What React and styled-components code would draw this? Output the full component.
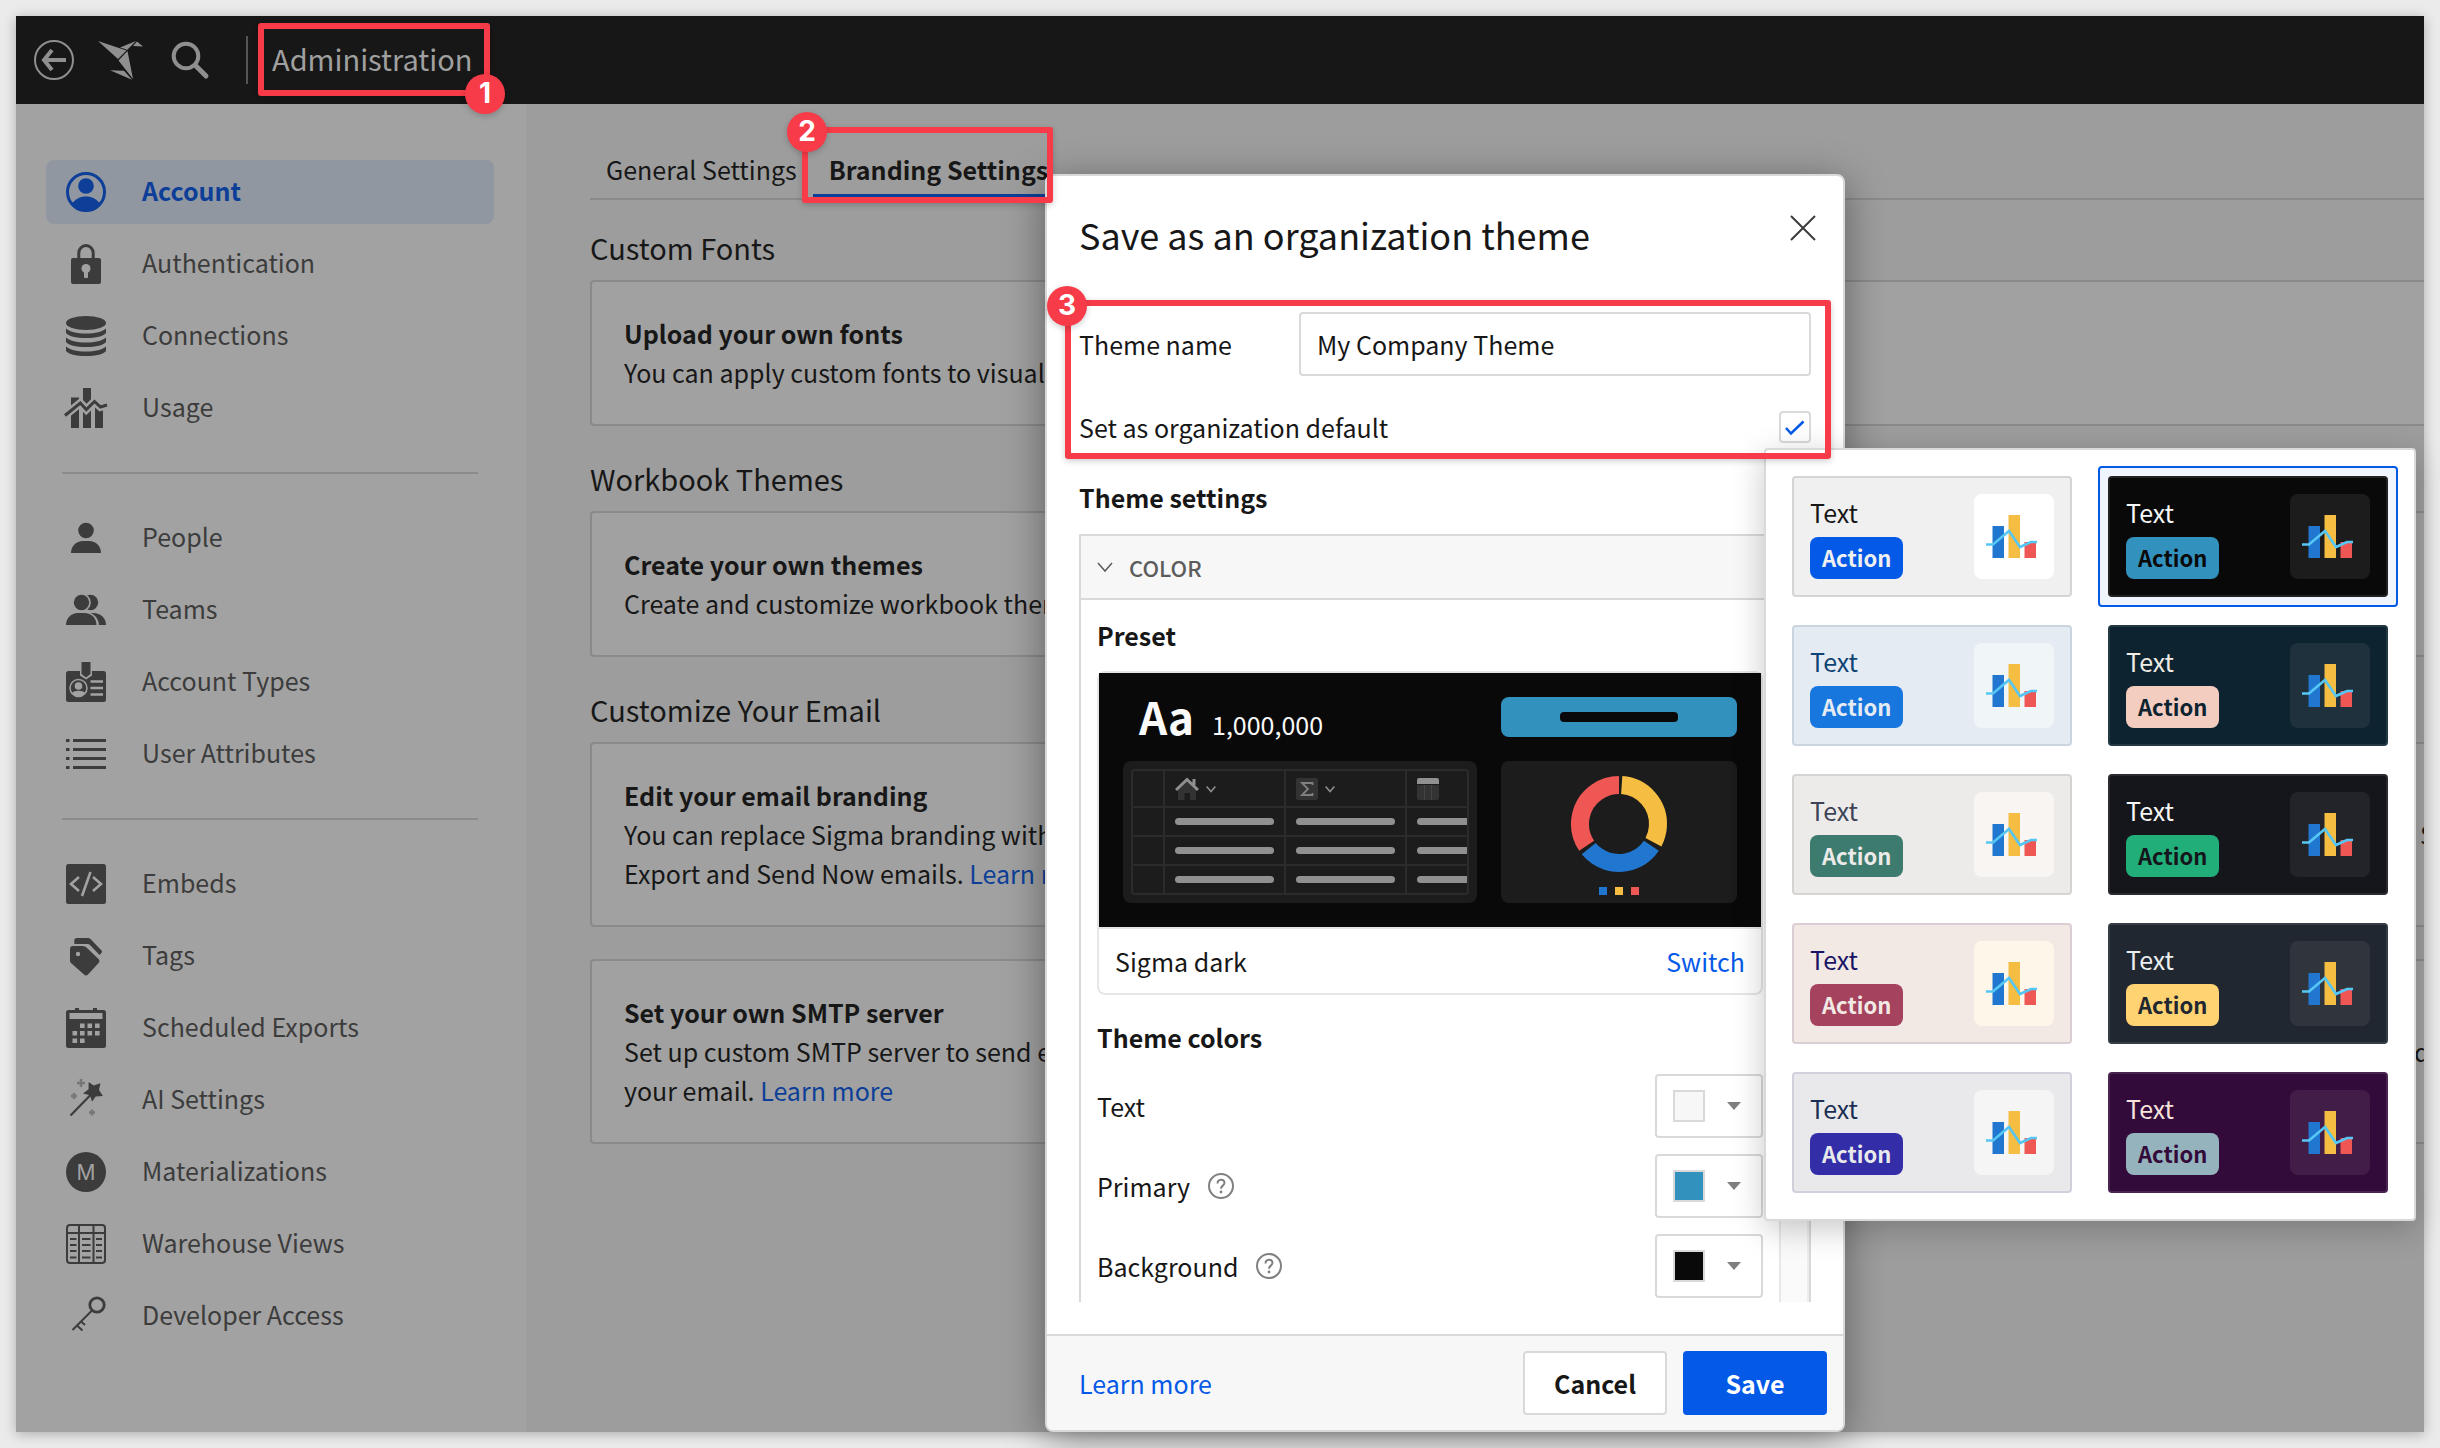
import React from "react";
import styled, { createGlobalStyle } from "styled-components";

const GlobalStyle = createGlobalStyle`
  *, *::before, *::after { box-sizing: border-box; }
  body {
    margin: 0;
    background: #ebebeb;
    color: #171717;
    font-family: "Noto Sans CJK SC", "Noto Sans", sans-serif;
    font-size: 25px;
    line-height: 39px;
  }
  button, input { font: inherit; color: inherit; }
  h1, h2, h3, p { margin: 0; font-size: inherit; font-weight: inherit; }
`;

const line = "#d9d9d9";
const blue = "#0559e7";
const red = "#f73b48";

const Page = styled.div`
  min-height: 100vh;
  padding: 16px;
  display: flex;
`;

const Frame = styled.div`
  position: relative;
  flex: 1;
  min-width: 0;
  display: flex;
  flex-direction: column;
  background: #9d9d9d;
  box-shadow: 0 2px 12px rgba(0, 0, 0, 0.28);
`;

const TopBar = styled.header`
  height: 88px;
  flex: none;
  padding-left: 18px;
  display: flex;
  align-items: center;
  gap: 24px;
  background: #171717;
  color: #8f8f8f;
`;

const BarButton = styled.button`
  padding: 0;
  border: 0;
  background: none;
  color: inherit;
  display: flex;
`;

const BarDivider = styled.div`
  width: 2px;
  height: 48px;
  margin-left: 10px;
  background: #555;
`;

const PageTitle = styled.h1`
  padding-bottom: 3px;
  font-size: 29px;
  color: #a0a0a0;
`;

const Body = styled.div`
  flex: 1;
  display: flex;
  overflow: hidden;
`;

const Sidebar = styled.nav`
  width: 510px;
  flex: none;
  padding: 56px 32px 56px 30px;
  background: #a2a2a2;
`;

const NavGroup = styled.ul`
  list-style: none;
  margin: 0;
  padding: 0;
  display: flex;
  flex-direction: column;
  gap: 8px;
  & + & {
    margin-top: 32px;
    padding-top: 34px;
    position: relative;
  }
  & + &::before {
    content: "";
    position: absolute;
    top: 0;
    left: 16px;
    right: 16px;
    height: 2px;
    background: #8b8b8b;
  }
`;

const NavLink = styled.a`
  height: 64px;
  padding: 0 20px;
  display: flex;
  align-items: center;
  gap: 36px;
  border-radius: 8px;
  text-decoration: none;
  color: ${(p) => (p.$active ? "#0d3f98" : "#3c3c3c")};
  font-weight: ${(p) => (p.$active ? 700 : 400)};
  background: ${(p) => (p.$active ? "#9197a1" : "transparent")};
  svg { overflow: visible; flex: none; }
`;

const NavLabel = styled.span`
  padding-bottom: 3px;
`;

const Main = styled.main`
  flex: 1;
  min-width: 0;
  overflow: hidden;
  padding: 40px 0 0 64px;
  display: flex;
  flex-direction: column;
  gap: 32px;
`;

const Tabs = styled.div`
  height: 56px;
  margin-bottom: -5px;
  display: flex;
  box-shadow: inset 0 -2px #8a8a8a;
`;

const Tab = styled.button`
  padding: 0 16px;
  border: 0;
  border-bottom: 6px solid ${(p) => (p.$active ? "#0d3f98" : "transparent")};
  background: none;
  white-space: nowrap;
  font-weight: ${(p) => (p.$active ? 700 : 400)};
`;

const Section = styled.section`
  display: flex;
  flex-direction: column;
`;

const SectionTitle = styled.h2`
  font-size: 29px;
  line-height: 41px;
  margin-bottom: 12px;
`;

const Card = styled.div`
  padding: 32px 0 32px 32px;
  border: 2px solid #8a8a8a;
  border-right: 0;
  border-radius: 4px 0 0 4px;
  background: #a1a1a1;
  white-space: nowrap;
  & + & { margin-top: 32px; }
`;

const CardTitle = styled.h3`
  font-weight: 700;
`;

const CardLine = styled.p`
  display: flex;
  justify-content: space-between;
`;

const LineEnd = styled.span`
  width: ${(p) => p.$shown}px;
`;

const Link = styled.a`
  color: ${(p) => (p.$dim ? "#0d3f98" : blue)};
  text-decoration: none;
`;

const Modal = styled.section`
  position: absolute;
  top: 158px;
  right: 579px;
  bottom: 0;
  width: 800px;
  display: flex;
  flex-direction: column;
  border: 2px solid ${line};
  border-radius: 8px;
  background: #fff;
  box-shadow: 0 8px 40px rgba(0, 0, 0, 0.4);
  overflow: hidden;
`;

const ModalHead = styled.div`
  padding: 32px 24px 0 32px;
  height: 136px;
  display: flex;
  justify-content: space-between;
`;

const ModalTitle = styled.h2`
  font-size: 36px;
  line-height: 53px;
`;

const CloseButton = styled.button`
  width: 32px;
  height: 40px;
  padding: 0;
  border: 0;
  background: none;
  display: grid;
  place-items: center;
`;

const Form = styled.div`
  flex: 1;
  min-height: 0;
  padding: 0 32px 32px;
  display: flex;
  flex-direction: column;
`;

const Field = styled.div`
  display: flex;
  align-items: center;
  justify-content: space-between;
  height: ${(p) => p.$height}px;
  flex: none;
`;

const TextInput = styled.input`
  width: 512px;
  height: 64px;
  padding: 0 16px;
  border: 2px solid ${line};
  border-radius: 4px;
  background: #fff;
`;

const CheckWrap = styled.span`
  position: relative;
  display: flex;
  svg { position: absolute; inset: 0; pointer-events: none; }
`;

const Checkbox = styled.input`
  appearance: none;
  width: 32px;
  height: 32px;
  margin: 0;
  border: 2px solid ${line};
  border-radius: 4px;
  background: #fff;
`;

const Strong = styled.h3`
  font-weight: 700;
  height: ${(p) => p.$height}px;
  line-height: ${(p) => p.$line || p.$height}px;
  flex: none;
`;

const Settings = styled.div`
  flex: 1;
  min-height: 0;
  overflow: hidden;
  display: flex;
  flex-direction: column;
  border: 2px solid ${line};
  border-bottom: 0;
`;

const SettingsHead = styled.button`
  flex: none;
  height: 64px;
  padding: 0 16px;
  display: flex;
  align-items: center;
  gap: 16px;
  border: 0;
  border-bottom: 2px solid ${line};
  background: #f7f7f7;
  color: #5c5c5c;
  font-size: 22px;
  font-weight: 500;
`;

const Scroll = styled.div`
  flex: 1;
  min-height: 0;
  overflow: hidden;
  display: flex;
`;

const ScrollContent = styled.div`
  flex: 1;
  min-width: 0;
  padding: 0 16px;
`;

const Track = styled.div`
  width: 30px;
  background: #fafafa;
  border-left: 2px solid #e8e8e8;
  border-right: 2px solid #ededed;
`;

const PresetCard = styled.div`
  border: 2px solid #e6e6e6;
  border-radius: 8px;
`;

const Preview = styled.div`
  height: 256px;
  padding: 24px 24px 22px;
  display: grid;
  grid-template-columns: 3fr 2fr;
  grid-template-rows: 40px 142px;
  gap: 24px;
  background: #090909;
  border-bottom: 2px solid #e6e6e6;
  overflow: hidden;
`;

const Sample = styled.div`
  padding-left: 16px;
  display: flex;
  align-items: baseline;
  gap: 18px;
  color: #fafafa;
  line-height: 38px;
`;

const SampleBig = styled.span`
  font-size: 44px;
  font-weight: 700;
`;

const PreviewButton = styled.div`
  display: grid;
  place-items: center;
  border-radius: 8px;
  background: #3391bd;
`;

const Pill = styled.div`
  width: ${(p) => p.$width}px;
  height: ${(p) => p.$height}px;
  flex: none;
  border-radius: 4px;
  background: ${(p) => p.$color};
`;

const Tile = styled.div`
  padding: 8px;
  border-radius: 8px;
  background: #1c1c1c;
  display: flex;
  flex-direction: column;
  align-items: center;
`;

const MiniTable = styled.div`
  width: 100%;
  height: 126px;
  border: 2px solid #2b2b2b;
  border-radius: 4px;
  background: #2b2b2b;
  display: grid;
  grid-template-columns: 30px 119px 119px 1fr;
  grid-template-rows: 35px 27px 27px 27px;
  gap: 2px;
  overflow: hidden;
`;

const MiniCell = styled.div`
  min-width: 0;
  padding-left: 10px;
  display: flex;
  align-items: center;
  gap: 7px;
  background: #1c1c1c;
  color: #909090;
  overflow: hidden;
  svg { flex: none; }
`;

const PresetFoot = styled.div`
  height: 64px;
  padding: 0 16px;
  display: flex;
  align-items: center;
  justify-content: space-between;
`;

const PlainButton = styled.button`
  padding: 0;
  border: 0;
  background: none;
  color: ${blue};
`;

const ColorRow = styled.div`
  height: 64px;
  margin-bottom: 16px;
  display: flex;
  align-items: center;
  justify-content: space-between;
`;

const ColorLabel = styled.label`
  display: flex;
  align-items: center;
  gap: 18px;
`;

const ColorButton = styled.button`
  width: 108px;
  height: 64px;
  padding: 0 20px 0 16px;
  display: flex;
  align-items: center;
  justify-content: space-between;
  border: 2px solid ${line};
  border-radius: 4px;
  background: #fff;
`;

const Swatch = styled.span`
  width: 32px;
  height: 32px;
  border: 2px solid ${line};
  background: ${(p) => p.$color};
`;

const ModalFoot = styled.footer`
  flex: none;
  height: 96px;
  padding: 0 16px 0 32px;
  display: flex;
  align-items: center;
  gap: 16px;
  border-top: 2px solid ${line};
  background: #f7f7f7;
`;

const FootLink = styled(Link)`
  margin-right: auto;
`;

const Button = styled.button`
  width: 144px;
  height: 64px;
  border-radius: 4px;
  border: 2px solid ${(p) => (p.$primary ? blue : line)};
  background: ${(p) => (p.$primary ? blue : "#fff")};
  color: ${(p) => (p.$primary ? "#fff" : "#171717")};
  font-weight: 700;
`;

const Popup = styled.div`
  position: absolute;
  top: 432px;
  right: 8px;
  padding: 16px;
  display: grid;
  grid-template-columns: 300px 300px;
  gap: 8px 16px;
  border: 2px solid ${line};
  border-radius: 4px;
  background: #fff;
  box-shadow: 0 8px 32px rgba(0, 0, 0, 0.22);
`;

const Option = styled.button`
  height: 141px;
  padding: 8px;
  display: flex;
  border: 2px solid ${(p) => (p.$selected ? blue : "transparent")};
  border-radius: 4px;
  background: ${(p) => (p.$selected ? "#f0f4fd" : "transparent")};
  text-align: left;
`;

const Theme = styled.span`
  flex: 1;
  height: 121px;
  padding: 16px;
  display: flex;
  justify-content: space-between;
  border: 2px solid ${(p) => p.$border};
  border-radius: 4px;
  background: ${(p) => p.$bg};
  color: ${(p) => p.$text};
`;

const ThemeText = styled.span`
  display: flex;
  flex-direction: column;
  gap: 6px;
  line-height: 37px;
`;

const Action = styled.span`
  height: 42px;
  padding: 0 12px;
  border-radius: 8px;
  background: ${(p) => p.$bg};
  color: ${(p) => p.$fg};
  font-size: 22px;
  line-height: 40px;
  font-weight: 700;
`;

const ChartTile = styled.span`
  width: 80px;
  height: 85px;
  display: grid;
  place-items: center;
  border-radius: 8px;
  background: ${(p) => p.$bg};
`;

const Callout = styled.div`
  position: absolute;
  left: ${(p) => p.$x}px;
  top: ${(p) => p.$y}px;
  width: ${(p) => p.$w}px;
  height: ${(p) => p.$h}px;
  border: 6px solid ${red};
  border-radius: 3px;
  box-shadow: 0 2px 6px rgba(0, 0, 0, 0.2);
  pointer-events: none;
`;

const Badge = styled.span`
  position: absolute;
  left: ${(p) => p.$x}px;
  top: ${(p) => p.$y}px;
  width: 40px;
  height: 40px;
  border-radius: 50%;
  background: ${red};
  color: #fff;
  font: 700 28px/38px Inter, sans-serif;
  text-align: center;
  box-shadow: 0 2px 6px rgba(0, 0, 0, 0.2);
`;

const bg = "#a2a2a2";

const navIcons = {
  Account: (
    <>
      <circle cx="20" cy="20" r="18.5" fill="none" stroke="currentColor" strokeWidth="3" />
      <circle cx="20" cy="14" r="7.8" />
      <path d="M6 32C9 27 14 24.5 20 24.5S31 27 34 32C31 36.5 26 39 20 39S9 36.5 6 32Z" />
    </>
  ),
  Authentication: (
    <>
      <path d="M12.8 15V9a7.2 7.5 0 0 1 14.4 0v6" fill="none" stroke="currentColor" strokeWidth="3" />
      <rect x="5" y="14" width="30" height="26" rx="2" />
      <circle cx="20" cy="24.5" r="4.5" fill={bg} />
      <rect x="18" y="26" width="4" height="8" rx="1" fill={bg} />
    </>
  ),
  Connections: (
    <>
      <ellipse cx="20" cy="7" rx="20" ry="7" />
      <path d="M0 12.5c3 3 11 5 20 5s17-2 20-5v4.500c-2 3-10 5-20 5s-18-2-20-5z" />
      <path d="M0 21.5c3 3 11 5 20 5s17-2 20-5v4.500c-2 3-10 5-20 5s-18-2-20-5z" />
      <path d="M0 30.5c3 3 11 5 20 5s17-2 20-5v4.500c-2 3-10 5-20 5s-18-2-20-5z" />
    </>
  ),
  Usage: (
    <>
      <path d="M5 9.5h8V40H5zM17 0h8v40h-8zM29 17h8v23h-8z" />
      <path d="M-1 27.5L14.3 15l6 6.500 8.200-8 6 5.500 6.500-2" fill="none" stroke={bg} strokeWidth="8" />
      <path d="M-1 27.5L14.3 15l6 6.500 8.200-8 6 5.500 6.500-2" fill="none" stroke="currentColor" strokeWidth="3" />
    </>
  ),
  People: (
    <>
      <circle cx="20" cy="12.5" r="7.8" />
      <path d="M5 35c0-7 5-12 12-12h6c7 0 12 5 12 12z" />
    </>
  ),
  Teams: (
    <>
      <circle cx="24.5" cy="12.5" r="7.7" />
      <path d="M12 35c0-7 5-12 12-12h3c8 0 13 5 13 12z" />
      <circle cx="15.5" cy="12.5" r="9.3" fill={bg} />
      <path d="M-1 36V22h20c8 0 14 6 14 14z" fill={bg} />
      <circle cx="15.5" cy="12.5" r="7.7" />
      <path d="M0 35c0-7 5-12 12-12h6.500c7 0 12 5 12 12z" />
    </>
  ),
  "Account Types": (
    <>
      <rect y="9" width="40" height="31" rx="2.5" />
      <path d="M14 8h12v5.500l-6 4-6-4z" fill={bg} />
      <path d="M15.5 0h9v12l-4.500 3.500-4.500-3.500z" />
      <circle cx="12.5" cy="26" r="8.5" fill="none" stroke={bg} strokeWidth="1.5" />
      <circle cx="12.5" cy="24" r="3.8" fill={bg} />
      <path d="M6 31c2-3 11-3 13 0-3 4.500-10 4.500-13 0z" fill={bg} />
      <path d="M24.5 19.5h12.500M24.5 26h12.500M24.5 32.5h12.500" stroke={bg} strokeWidth="2.5" />
    </>
  ),
  "User Attributes": (
    <path
      d="M0 6.5h3.500M7 6.5h33M0 15.5h3.500M7 15.5h33M0 24.5h3.500M7 24.5h33M0 33.5h3.500M7 33.5h33"
      stroke="currentColor"
      strokeWidth="3"
    />
  ),
  Embeds: (
    <>
      <rect width="40" height="40" rx="2.5" />
      <path d="M13 13l-8 7 8 7M27 13l8 7-8 7M24.5 8L16 32" fill="none" stroke={bg} strokeWidth="2.6" />
    </>
  ),
  Tags: (
    <>
      <path d="M8.3 8V4.5a2.500 2.500 0 0 1 2.500-2.500H22q1.500 0 2.500 1l11 11.500q1 1 .3 2L33.6 19 24 9q-1-1-2.500-1z" />
      <path d="M4 13q0-3 3-3h10q2 0 3.500 1.500l12.500 12q1 1.500 0 3l-11 12q-2 2-4 0L5 27q-1-1-1-2.500z" />
      <circle cx="12" cy="18" r="2.2" fill={bg} />
    </>
  ),
  "Scheduled Exports": (
    <>
      <rect y="2" width="40" height="38" rx="2.5" />
      <path d="M9 0h4v3H9zM27 0h4v3h-4z" />
      <path
        d="M3.5 5h33v6h-33zM14 15.5h4.600v4.600H14zM21.5 15.5h4.600v4.600h-4.600zM29 15.5h4.600v4.600H29zM6.5 23h4.600v4.600H6.5zM14 23h4.600v4.600H14zM21.5 23h4.600v4.600h-4.600zM29 23h4.600v4.600H29zM6.5 30.5h4.600v4.600H6.5zM14 30.5h4.600v4.600H14z"
        fill={bg}
      />
    </>
  ),
  "AI Settings": (
    <>
      <path d="M22.6 2l5 3.500 6.800-2.200-1.400 6.700 3.900 6-7.200.5-3.700 5.200-2-6.500-7-1.600 5.600-4.300z" />
      <path d="M25 14.5L4.5 35.5" stroke="currentColor" strokeWidth="2.2" />
      <path d="M15-1v8M11 3h8M8 13v6M5 16h6M26 29.5v6M23 32.5h6" stroke="#777" strokeWidth="2.6" />
    </>
  ),
  Materializations: (
    <>
      <circle cx="20" cy="20" r="20" />
      <text x="20" y="27.5" textAnchor="middle" fontFamily="Inter, sans-serif" fontSize="21" fill={bg}>
        M
      </text>
    </>
  ),
  "Warehouse Views": (
    <g fill="none" stroke="currentColor" strokeWidth="2">
      <rect x="1" y="1" width="38" height="38" rx="3" />
      <path d="M1 9h38M13 1v38M27.5 1v38" />
      <path d="M4 15h6.500M4 21h6.500M4 27h6.500M4 33.5h6.500M16 15h8.500M16 21h8.500M16 27h8.500M16 33.5h8.500M30 15h6M30 21h6M30 27h6M30 33.5h6" />
    </g>
  ),
  "Developer Access": (
    <g fill="none" stroke="currentColor">
      <circle cx="31" cy="9" r="7.2" strokeWidth="2.8" />
      <path d="M26 14.5L6.5 34M11 29.5l5.500 5M15 25.5l4 3.500" strokeWidth="2" />
    </g>
  ),
};

const navGroups = [
  ["Account", "Authentication", "Connections", "Usage"],
  ["People", "Teams", "Account Types", "User Attributes"],
  [
    "Embeds",
    "Tags",
    "Scheduled Exports",
    "AI Settings",
    "Materializations",
    "Warehouse Views",
    "Developer Access",
  ],
];

const themes = [
  { bg: "#f0f0f0", border: "#d4d4d4", text: "#171717", action: blue, fg: "#f0f0f0", tile: "#ffffff" },
  { bg: "#090909", border: "#222222", text: "#f7f7f7", action: "#3391bd", fg: "#090909", tile: "#1c1c1c" },
  { bg: "#e5ebf3", border: "#cbd5df", text: "#0e4474", action: "#1777df", fg: "#e5ebf3", tile: "#f0f5f8" },
  { bg: "#0d2430", border: "#233843", text: "#f0ece6", action: "#f3cdbf", fg: "#0d2430", tile: "#1e313c" },
  { bg: "#ecebe9", border: "#d5d4d3", text: "#3d4358", action: "#3c7b6e", fg: "#ecebe9", tile: "#f8f5f2" },
  { bg: "#15161b", border: "#2a2b30", text: "#f7f7f7", action: "#21ae79", fg: "#15161b", tile: "#232429" },
  { bg: "#f2e9e4", border: "#dacdd4", text: "#1a1464", action: "#a5435f", fg: "#f2e9e4", tile: "#fff6ea" },
  { bg: "#212730", border: "#363d46", text: "#eceef0", action: "#ffd272", fg: "#212730", tile: "#30343d" },
  { bg: "#e9e9eb", border: "#d0d1dc", text: "#1b2f54", action: "#332da8", fg: "#e9e9eb", tile: "#f5f5f5" },
  { bg: "#330b3a", border: "#48254f", text: "#f8e3dd", action: "#95b3bd", fg: "#330b3a", tile: "#421d47" },
];

const colors = [
  { name: "Text", value: "#f7f7f7" },
  { name: "Primary", value: "#3391bd", help: true },
  { name: "Background", value: "#090909", help: true },
];

function NavIcon({ name }) {
  return (
    <svg width="40" height="40" viewBox="0 0 40 40" fill="currentColor" aria-hidden="true">
      {navIcons[name]}
    </svg>
  );
}

function Chevron({ size, stroke }) {
  return (
    <svg width={size} height={size} viewBox="0 0 16 16" fill="none" stroke="currentColor" strokeWidth={stroke}>
      <path d="M1 4l7 8 7-8" />
    </svg>
  );
}

function HelpIcon() {
  return (
    <svg width="26" height="26" viewBox="0 0 26 26" fill="none" stroke="#808080" strokeWidth="2">
      <circle cx="13" cy="13" r="12" />
      <path d="M9.5 10.5c0-5 7-5 7-.7 0 3-3.500 2.700-3.500 6" />
      <circle cx="13" cy="19" r="1.4" fill="#808080" stroke="none" />
    </svg>
  );
}

function BarChart() {
  return (
    <svg width="56" height="46" viewBox="0 0 56 46">
      <path d="M6.5 12H18v32H6.5z" fill="#2176cf" />
      <path d="M22.5 1H34v43H22.5z" fill="#f5bd41" />
      <path d="M38.5 28H50v16H38.5z" fill="#ee5753" />
      <path d="M0 30.5h7l16-13.500 11 16 11-5h6" fill="none" stroke="#56c7f5" strokeWidth="2.6" />
    </svg>
  );
}

function Donut() {
  const arcs = [
    { color: "#f5bd41", from: 4, sweep: 114 },
    { color: "#2176cf", from: 124, sweep: 107 },
    { color: "#ee5753", from: 236, sweep: 124 },
  ];
  return (
    <svg width="100" height="126" viewBox="0 0 100 126">
      {arcs.map((a) => (
        <circle
          key={a.color}
          cx="50"
          cy="55"
          r="39"
          fill="none"
          stroke={a.color}
          strokeWidth="18"
          pathLength="360"
          strokeDasharray={`${a.sweep} 360`}
          transform={`rotate(${a.from - 90} 50 55)`}
        />
      ))}
      <path d="M30 118h8v8h-8z" fill="#2176cf" />
      <path d="M46 118h8v8h-8z" fill="#f5bd41" />
      <path d="M62 118h8v8h-8z" fill="#ee5753" />
    </svg>
  );
}

function HouseIcon() {
  return (
    <svg width="24" height="24" viewBox="0 0 24 24">
      <path d="M3 12l9-8 9 8v11h-6v-7H9.5v7H3z" fill="#333" />
      <path d="M1 13L12 2.500 23 13M19 2v6" fill="none" stroke="#909090" strokeWidth="3" />
    </svg>
  );
}

function SigmaIcon() {
  return (
    <svg width="22" height="22" viewBox="0 0 22 22">
      <rect width="22" height="22" rx="2" fill="#333" />
      <path d="M16.5 7V5H6l6 6-6 6h10.500v-2" fill="none" stroke="#808080" strokeWidth="1.8" />
    </svg>
  );
}

function ColumnsIcon() {
  return (
    <svg width="22" height="22" viewBox="0 0 22 22">
      <path d="M0 7h22v13q0 2-2 2H2q-2 0-2-2z" fill="#333" />
      <path d="M7.5 7v15M14.5 7v15" stroke="#444" />
      <path d="M2 0h18q2 0 2 2v4H0V2q0-2 2-2z" fill="#909090" />
    </svg>
  );
}

function PreviewTable() {
  const head = [
    null,
    <><HouseIcon /><Chevron size={10} stroke={2.4} /></>,
    <><SigmaIcon /><Chevron size={10} stroke={2.4} /></>,
    <ColumnsIcon />,
  ];
  return (
    <MiniTable>
      {head.map((content, i) => (
        <MiniCell key={i}>{content}</MiniCell>
      ))}
      {[0, 1, 2].flatMap((row) =>
        [0, 1, 2, 3].map((col) => (
          <MiniCell key={`${row}-${col}`}>
            {col > 0 && <Pill $width={99} $height={7} $color="#909090" />}
          </MiniCell>
        ))
      )}
    </MiniTable>
  );
}

function ThemeOption({ theme, selected }) {
  return (
    <Option type="button" $selected={selected} aria-pressed={selected}>
      <Theme $bg={theme.bg} $border={theme.border} $text={theme.text}>
        <ThemeText>
          Text
          <Action $bg={theme.action} $fg={theme.fg}>Action</Action>
        </ThemeText>
        <ChartTile $bg={theme.tile}><BarChart /></ChartTile>
      </Theme>
    </Option>
  );
}

function Header() {
  return (
    <TopBar>
      <BarButton type="button" aria-label="Back">
        <svg width="40" height="40" viewBox="0 0 40 40" fill="none" stroke="currentColor">
          <circle cx="20" cy="20" r="19" strokeWidth="2" />
          <path d="M32 20H10M18 10l-8 10 8 10" strokeWidth="4" />
        </svg>
      </BarButton>
      <BarButton type="button" aria-label="Home">
        <svg width="46" height="40" viewBox="0 0 46 40" fill="currentColor">
          <path d="M0 1l28.500 9.500L20 19zM20.5 20.5L29.5 11l5.500 28zM22 7.5L38 1l-9 9-2-1zM39 1.5l6 5-10-.5zM12 30.3l14 .5 8 9z" />
        </svg>
      </BarButton>
      <BarButton type="button" aria-label="Search">
        <svg width="44" height="40" viewBox="0 0 44 40" fill="none" stroke="currentColor">
          <circle cx="18" cy="16" r="12.3" strokeWidth="4" />
          <path d="M28 26l10 10" strokeWidth="5" strokeLinecap="round" />
        </svg>
      </BarButton>
      <BarDivider />
      <PageTitle>Administration</PageTitle>
    </TopBar>
  );
}

export default function App() {
  return (
    <Page>
      <GlobalStyle />
      <Frame>
        <Header />
        <Body>
          <Sidebar>
            {navGroups.map((group) => (
              <NavGroup key={group[0]}>
                {group.map((name) => (
                  <li key={name}>
                    <NavLink href="#" $active={name === "Account"}>
                      <NavIcon name={name} />
                      <NavLabel>{name}</NavLabel>
                    </NavLink>
                  </li>
                ))}
              </NavGroup>
            ))}
          </Sidebar>
          <Main>
            <Tabs>
              <Tab type="button">General Settings</Tab>
              <Tab type="button" $active>Branding Settings</Tab>
            </Tabs>
            <Section>
              <SectionTitle>Custom Fonts</SectionTitle>
              <Card>
                <CardTitle>Upload your own fonts</CardTitle>
                <p>You can apply custom fonts to visualizations.</p>
              </Card>
            </Section>
            <Section>
              <SectionTitle>Workbook Themes</SectionTitle>
              <Card>
                <CardTitle>Create your own themes</CardTitle>
                <p>Create and customize workbook themes.</p>
              </Card>
            </Section>
            <Section>
              <SectionTitle>Customize Your Email</SectionTitle>
              <Card>
                <CardTitle>Edit your email branding</CardTitle>
                <CardLine>
                  <span>You can replace Sigma branding with your own in</span>
                  <LineEnd $shown={4}>Scheduled</LineEnd>
                </CardLine>
                <p>
                  Export and Send Now emails. <Link $dim href="#">Learn more</Link>
                </p>
              </Card>
              <Card>
                <CardTitle>Set your own SMTP server</CardTitle>
                <CardLine>
                  <span>Set up custom SMTP server to send emails from your</span>
                  <LineEnd $shown={10}>domain</LineEnd>
                </CardLine>
                <p>
                  your email. <Link $dim href="#">Learn more</Link>
                </p>
              </Card>
            </Section>
          </Main>
        </Body>

        <Modal role="dialog" aria-labelledby="dialog-title">
          <ModalHead>
            <ModalTitle id="dialog-title">Save as an organization theme</ModalTitle>
            <CloseButton type="button" aria-label="Close">
              <svg width="26" height="26" viewBox="0 0 26 26" stroke="#3c3c3c" strokeWidth="2">
                <path d="M1 1l24 24M25 1L1 25" />
              </svg>
            </CloseButton>
          </ModalHead>
          <Form>
            <Field $height={64}>
              <label htmlFor="theme-name">Theme name</label>
              <TextInput id="theme-name" type="text" defaultValue="My Company Theme" />
            </Field>
            <Field $height={102}>
              <label htmlFor="org-default">Set as organization default</label>
              <CheckWrap>
                <Checkbox id="org-default" type="checkbox" defaultChecked />
                <svg width="32" height="32" viewBox="0 0 32 32" fill="none" stroke={blue} strokeWidth="2.5">
                  <path d="M7 17l5 5.500L24.5 10.5" />
                </svg>
              </CheckWrap>
            </Field>
            <Strong $height={56} $line={39}>Theme settings</Strong>
            <Settings>
              <SettingsHead type="button">
                <Chevron size={16} stroke={1.5} />
                COLOR
              </SettingsHead>
              <Scroll>
                <ScrollContent>
                  <Strong $height={71}>Preset</Strong>
                  <PresetCard>
                    <Preview>
                      <Sample>
                        <SampleBig>Aa</SampleBig>
                        1,000,000
                      </Sample>
                      <PreviewButton>
                        <Pill $width={118} $height={10} $color="#090909" />
                      </PreviewButton>
                      <Tile><PreviewTable /></Tile>
                      <Tile><Donut /></Tile>
                    </Preview>
                    <PresetFoot>
                      Sigma dark
                      <PlainButton type="button">Switch</PlainButton>
                    </PresetFoot>
                  </PresetCard>
                  <Strong $height={79} $line={84}>Theme colors</Strong>
                  {colors.map((c) => (
                    <ColorRow key={c.name}>
                      <ColorLabel htmlFor={`color-${c.name}`}>
                        {c.name}
                        {c.help && <HelpIcon />}
                      </ColorLabel>
                      <ColorButton id={`color-${c.name}`} type="button">
                        <Swatch $color={c.value} />
                        <svg width="14" height="8" viewBox="0 0 14 8" fill="#808080">
                          <path d="M0 0h14L7 8z" />
                        </svg>
                      </ColorButton>
                    </ColorRow>
                  ))}
                </ScrollContent>
                <Track />
              </Scroll>
            </Settings>
          </Form>
          <ModalFoot>
            <FootLink href="#">Learn more</FootLink>
            <Button type="button">Cancel</Button>
            <Button type="button" $primary>Save</Button>
          </ModalFoot>
        </Modal>

        <Popup role="group" aria-label="Theme presets">
          {themes.map((theme, i) => (
            <ThemeOption key={theme.bg} theme={theme} selected={i === 1} />
          ))}
        </Popup>

        <Callout $x={242} $y={7} $w={232} $h={73} />
        <Badge $x={449} $y={58}>1</Badge>
        <Callout $x={786} $y={111} $w={251} $h={76} />
        <Badge $x={771} $y={96}>2</Badge>
        <Callout $x={1049} $y={284} $w={766} $h={159} />
        <Badge $x={1031} $y={270}>3</Badge>
      </Frame>
    </Page>
  );
}
